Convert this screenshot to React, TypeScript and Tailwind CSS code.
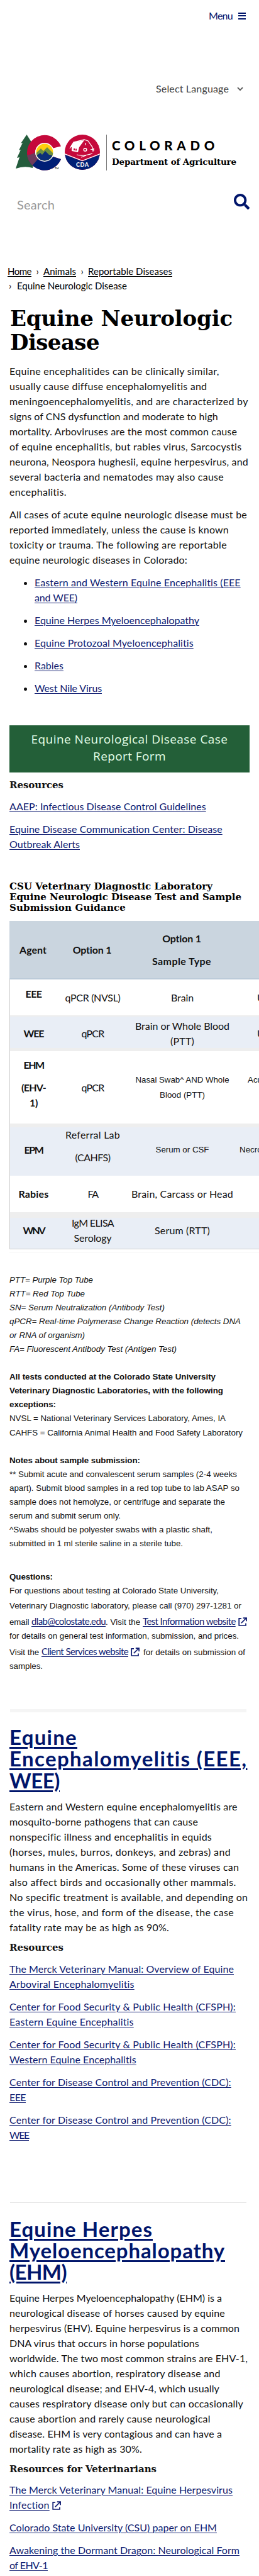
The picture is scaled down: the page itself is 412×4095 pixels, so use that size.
import { useLayoutEffect, useRef, useState } from "react";
import { FaSearch } from "react-icons/fa";

const SANS = "font-['Lato',sans-serif]";
const SLAB = "font-['DejaVu_Serif',serif] font-bold";
const ARIAL = "font-['Liberation_Sans',Arial,sans-serif] text-[13.33px]";
const LINK = "text-[#0d1a70] underline decoration-1 underline-offset-2";

/* A run of text whose letter spacing is tuned so that it spans `w` pixels. */
function Fit({ w, className = "", children }: { w: number; className?: string; children: string }) {
  const ref = useRef<HTMLSpanElement>(null);
  const [spacing, setSpacing] = useState(0);
  useLayoutEffect(() => {
    const el = ref.current;
    if (!el) return;
    el.style.letterSpacing = "0px";
    const natural = el.getBoundingClientRect().width;
    const next = (w - natural) / children.length;
    el.style.letterSpacing = `${next}px`;
    setSpacing(next);
  }, [w, children]);
  return (
    <span ref={ref} className={`whitespace-pre ${className}`} style={{ letterSpacing: `${spacing}px` }}>
      {children}
    </span>
  );
}

type Row = [string, number];

function Lines({ rows, className = "", runClass = "" }: { rows: Row[]; className?: string; runClass?: string }) {
  return (
    <p className={className}>
      {rows.map(([text, w]) => (
        <span key={text} className="block">
          <Fit w={w} className={runClass}>{text}</Fit>
        </span>
      ))}
    </p>
  );
}

function LinkBlock({ rows }: { rows: Row[] }) {
  return (
    <a href="#" className="block">
      <Lines rows={rows} runClass={LINK} />
    </a>
  );
}

function External({ className = "" }: { className?: string }) {
  return (
    <svg viewBox="0 0 14 14" className={`inline-block h-3.5 w-3.5 ${className}`} fill="none" stroke="#0d1a70" strokeWidth="1.7">
      <path d="M5 1.8H1.2V13H12V9.5M4.8 9.2 12 2M7.8 1.2h5.3v5" />
    </svg>
  );
}

function Logo() {
  return (
    <div className="flex h-[57px] items-stretch">
      <svg viewBox="0 0 136 57" className="h-[57px] w-[136px] shrink-0">
        <defs>
          <clipPath id="sun"><circle cx="46" cy="28" r="13.4" /></clipPath>
          <clipPath id="seal"><circle cx="106" cy="28" r="28" /></clipPath>
          <clipPath id="ring">
            <path d="M72 18.5A28 28 0 1 0 72 39L57.500 34.500A14 14 0 1 1 57.500 22Z" />
          </clipPath>
        </defs>
        <path d="M17.500 0 27 15 24 14 30 28 27 53Q14 49 0 54L6 36 2 37 8 24 5 25 11 13 8 14Z" fill="#245c3c" />
        <g clipPath="url(#ring)">
          <rect x="17" width="58" height="57" fill="#c5093b" />
          <path d="M20 44 38 27 56 34 75 32V57H17Z" fill="#001f76" />
          <path d="M18 32Q26 33 32 27L36 38 24 52H16Z" fill="#6d3a5c" />
        </g>
        <circle cx="46" cy="28" r="15" fill="#fff" />
        <g clipPath="url(#sun)">
          <rect x="32" y="14" width="28" height="28" fill="#ffcf0d" />
          <path d="M29 33 40 22 44 26 50 20 64 34V44H29Z" fill="#6d9040" />
          <path d="M31 35 39 29 42 32 47 26 53 32 62 34V44H31Z" fill="#0b2f7a" />
        </g>
        <text x="62" y="55" fontSize="4" className="font-['Lato']" fontWeight="700">TM</text>
        <g clipPath="url(#seal)">
          <rect x="78" width="56" height="57" fill="#c5093b" />
          <path d="M76 31 106 42.500 136 31V57H76Z" fill="#001f76" />
          <path d="M76 30 106 41.500 136 30" stroke="#fff" strokeWidth="1.300" fill="none" />
        </g>
        <path d="M86 22 92 12 109 8 115 10 122 20 123 27" stroke="#fff" strokeWidth="1.300" fill="none" />
        <path d="M89 16 93 12 109 9 101 20 99 28 89 26V20L87 20Z" fill="#fff" />
        <path d="M92 22h2v3h-2zM95 22.500h2v3h-2z" fill="#c5093b" />
        <circle cx="110.500" cy="24" r="2.300" fill="none" stroke="#fff" strokeWidth="1.500" />
        <path d="M111 13v4M119 23.500h5M124 21v5M97 32Q107 35 122 30M104 36 112 33" stroke="#fff" strokeWidth="1.200" fill="none" />
        <text x="96" y="51" fontSize="9" fill="#fff" fontWeight="900" textLength="20" className="font-['Lato']">CDA</text>
      </svg>
      <div className="ml-[8px] w-px bg-[#777]" />
      <div className="ml-[8px] pt-[5px]">
        <div className="h-[25px] font-['Lato',sans-serif] text-[20.5px] leading-[25px] font-black text-black">
          <Fit w={170}>COLORADO</Fit>
        </div>
        <div className={`mt-[2px] text-[13.5px] leading-[22px] text-black ${SLAB}`}>
          <Fit w={198}>Department of Agriculture</Fit>
        </div>
      </div>
    </div>
  );
}

function Cell({ rows, bold = false, arial = false, className = "" }: { rows: Row[]; bold?: boolean; arial?: boolean; className?: string }) {
  return (
    <div className={`flex flex-col items-center justify-center leading-6 ${bold ? "font-bold" : ""} ${arial ? ARIAL : ""} ${className}`}>
      {rows.map(([t, w]) => <span key={t} className="block"><Fit w={w}>{t}</Fit></span>)}
    </div>
  );
}

const GRID = "grid grid-cols-[75px_113px_172px_120px]";

function TestTable() {
  return (
    <div className="w-[397px] overflow-hidden">
      <div className="w-[480px] border-b border-l border-[#ccc]">
        <div className={`${GRID} -ml-px h-[93px] border-b-2 border-[#bccbd9] bg-[#cad5df] font-bold`}>
          <Cell rows={[["Agent", 43]]} />
          <Cell rows={[["Option 1", 62]]} />
          <Cell rows={[["Option 1", 62], ["Sample Type", 94]]} className="gap-3" />
        </div>
        <div className={`${GRID} h-[57px]`}>
          <Cell bold rows={[["EEE", 26]]} className="pb-3" />
          <Cell rows={[["qPCR (NVSL)", 88]]} />
          <Cell rows={[["Brain", 36]]} />
          <div className="flex items-center pl-[33px]">U</div>
        </div>
        <div className={`${GRID} h-[57px] bg-[#e9eef6] shadow-[inset_0_2px_0_#eee,inset_0_-5px_0_#eee]`}>
          <Cell bold rows={[["WEE", 32]]} />
          <Cell rows={[["qPCR", 36]]} />
          <Cell rows={[["Brain or Whole Blood", 150], ["(PTT)", 38]]} />
          <div className="flex items-center pl-[33px]">U</div>
        </div>
        <div className={`${GRID} h-[116px] shadow-[inset_0_-1px_0_#eee]`}>
          <div className="flex flex-col items-center justify-center pb-3 leading-6 font-bold">
            <Fit w={32}>EHM</Fit>
            <div className="mt-3"><Fit w={39}>(EHV-</Fit></div>
            <Fit w={13}>1)</Fit>
          </div>
          <Cell rows={[["qPCR", 36]]} />
          <Cell arial rows={[["Nasal Swab^ AND Whole", 149], ["Blood (PTT)", 72]]} />
          <div className={`${ARIAL} flex items-center pb-6 pl-[18px]`}>Acu</div>
        </div>
        <div className={`${GRID} h-[82px] bg-[#e9eef6] shadow-[inset_0_5px_0_#eee]`}>
          <Cell bold rows={[["EPM", 30]]} />
          <Cell rows={[["Referral Lab", 87], ["(CAHFS)", 56]]} className="gap-3 pb-3" />
          <Cell arial rows={[["Serum or CSF", 85]]} />
          <div className={`${ARIAL} flex items-center pl-[5px]`}>Necro</div>
        </div>
        <div className={`${GRID} h-[58px]`}>
          <Cell bold rows={[["Rabies", 48]]} />
          <Cell rows={[["FA", 16]]} />
          <Cell rows={[["Brain, Carcass or Head", 162]]} />
        </div>
        <div className={`${GRID} h-[58px] bg-[#e9eef6] shadow-[inset_0_9px_0_#eee]`}>
          <Cell bold rows={[["WNV", 34]]} />
          <Cell rows={[["IgM ELISA", 67], ["Serology", 60]]} />
          <Cell rows={[["Serum (RTT)", 88]]} />
        </div>
      </div>
      <div className="mt-1 h-px bg-[#f3f3f3]" />
    </div>
  );
}

function Heading({ rows, className = "" }: { rows: Row[]; className?: string }) {
  return (
    <h2 className={`text-[33px] leading-[34.3px] font-bold ${className}`}>
      <a href="#">
        <Lines rows={rows} runClass="text-[#00156b] underline decoration-[3px] underline-offset-[3px]" />
      </a>
    </h2>
  );
}

function SlabLabel({ text, w, className = "" }: { text: string; w: number; className?: string }) {
  return <h3 className={`h-[17px] text-[15px] leading-[17px] ${SLAB} ${className}`}><Fit w={w}>{text}</Fit></h3>;
}

export default function App() {
  return (
    <div className={`${SANS} h-[4095px] w-[412px] overflow-hidden bg-white text-base leading-6 text-[#111]`}>
      <header className="h-[420px]">
        <div className="flex h-[50px] items-center justify-end pr-[21px] text-[#00156b]">
          <Fit w={38}>Menu</Fit>
          <div className="ml-[9px] flex w-3 flex-col gap-[2.5px]">
            <i className="h-[2px] bg-[#00156b]" />
            <i className="h-[2px] bg-[#00156b]" />
            <i className="h-[2px] bg-[#00156b]" />
          </div>
        </div>
        <div className="mt-[79px] flex h-6 items-center justify-end pr-[25px] text-[#444]">
          <Fit w={116}>Select Language</Fit>
          <svg viewBox="0 0 10 7" className="ml-[13px] h-[7px] w-[10px]" fill="none" stroke="#555" strokeWidth="1.800"><path d="M1 1.200 5 5.200 9 1.200" /></svg>
        </div>
        <div className="mt-[61px] pl-[25px]"><Logo /></div>
        <div className="mt-[35px] flex items-start justify-between pr-[15px] pl-[27px]">
          <div className="pt-1 text-[20px] leading-[30px] text-[#999]"><Fit w={60}>Search</Fit></div>
          <FaSearch className="mt-[2px] h-[25px] w-[25px] text-[#00156b]" />
        </div>
      </header>

      <nav className="flex flex-col pl-3 text-[15px] leading-[23px] text-black">
        <div className="flex">
          <Fit w={38} className="underline underline-offset-2">Home</Fit>
          <span className="w-[19px] text-center">›</span>
          <Fit w={52} className="underline underline-offset-2">Animals</Fit>
          <span className="w-[19px] text-center">›</span>
          <Fit w={134} className="underline underline-offset-2">Reportable Diseases</Fit>
        </div>
        <div className="flex"><span className="w-[15px] pl-[2px]">›</span><Fit w={175}>Equine Neurologic Disease</Fit></div>
      </nav>

      <main className="pl-[15px]">
        <h1 className={`mt-[21px] pl-px text-[34px] leading-[38px] text-black ${SLAB}`}>
          <Lines rows={[["Equine Neurologic", 354], ["Disease", 142]]} />
        </h1>
        <Lines className="mt-[15px]" rows={[
          ["Equine encephalitides can be clinically similar,", 334],
          ["usually cause diffuse encephalomyelitis and", 314],
          ["meningoencephalomyelitis, and are characterized by", 380],
          ["signs of CNS dysfunction and moderate to high", 332],
          ["mortality. Arboviruses are the most common cause", 362],
          ["of equine encephalitis, but rabies virus, Sarcocystis", 370],
          ["neurona, Neospora hughesii, equine herpesvirus, and", 380],
          ["several bacteria and nematodes may also cause", 341],
          ["encephalitis.", 91],
        ]} />
        <Lines className="mt-3" rows={[
          ["All cases of acute equine neurologic disease must be", 378],
          ["reported immediately, unless the cause is known", 349],
          ["toxicity or trauma. The following are reportable", 346],
          ["equine neurologic diseases in Colorado:", 283],
        ]} />
        <ul className="mt-3 flex list-disc flex-col gap-3 pl-10">
          <li><LinkBlock rows={[["Eastern and Western Equine Encephalitis (EEE", 328], ["and WEE)", 68]]} /></li>
          <li><LinkBlock rows={[["Equine Herpes Myeloencephalopathy", 262]]} /></li>
          <li><LinkBlock rows={[["Equine Protozoal Myeloencephalitis", 253]]} /></li>
          <li><LinkBlock rows={[["Rabies", 46]]} /></li>
          <li><LinkBlock rows={[["West Nile Virus", 107]]} /></li>
        </ul>

        <button className="mt-[47px] block h-[75px] w-[382px] bg-[#235f38] pb-1 font-['Open_Sans',sans-serif] text-[19px] leading-[27px] text-[#e6ffe9]">
          <Lines rows={[["Equine Neurological Disease Case", 313], ["Report Form", 116]]} />
        </button>

        <SlabLabel text="Resources" w={86} className="mt-[12px]" />
        <div className="mt-[13px] flex flex-col gap-3">
          <LinkBlock rows={[["AAEP: Infectious Disease Control Guidelines", 313]]} />
          <LinkBlock rows={[["Equine Disease Communication Center: Disease", 339], ["Outbreak Alerts", 112]]} />
        </div>

        <h3 className={`mt-[47px] text-[15px] leading-[17px] text-black ${SLAB}`}>
          <Lines rows={[["CSU Veterinary Diagnostic Laboratory", 323], ["Equine Neurologic Disease Test and Sample", 369], ["Submission Guidance", 185]]} />
        </h3>
        <div className="mt-[12px]"><TestTable /></div>

        <section className={`${ARIAL} mt-[33px] leading-[22px]`}>
          <Lines className="italic" rows={[
            ["PTT= Purple Top Tube", 133],
            ["RTT= Red Top Tube", 120],
            ["SN= Serum Neutralization (Antibody Test)", 247],
            ["qPCR= Real-time Polymerase Change Reaction (detects DNA", 368],
            ["or RNA of organism)", 120],
            ["FA= Fluorescent Antibody Test (Antigen Test)", 266],
          ]} />
          <Lines className="mt-[22px] font-bold" rows={[
            ["All tests conducted at the Colorado State University", 328],
            ["Veterinary Diagnostic Laboratories, with the following", 340],
            ["exceptions:", 74],
          ]} />
          <Lines className="leading-[22.5px]" rows={[
            ["NVSL = National Veterinary Services Laboratory, Ames, IA", 344],
            ["CAHFS = California Animal Health and Food Safety Laboratory", 371],
          ]} />
          <Lines className="mt-[22px] font-bold" rows={[["Notes about sample submission:", 208]]} />
          <Lines rows={[
            ["** Submit acute and convalescent serum samples (2-4 weeks", 362],
            ["apart). Submit blood samples in a red top tube to lab ASAP so", 366],
            ["sample does not hemolyze, or centrifuge and separate the", 343],
            ["serum and submit serum only.", 177],
            ["^Swabs should be polyester swabs with a plastic shaft,", 323],
            ["submitted in 1 ml sterile saline in a sterile tube.", 276],
          ]} />
          <Lines className="mt-[31px] font-bold" rows={[["Questions:", 69]]} />
          <div className="-mt-px leading-6">
            <Lines rows={[
              ["For questions about testing at Colorado State University,", 333],
              ["Veterinary Diagnostic laboratory, please call (970) 297-1281 or", 369],
            ]} />
            <div className="flex h-6 items-baseline">
              <Fit w={35}>email </Fit>
              <a href="#" className={`${SANS} ${LINK} text-[15px] leading-6`}><Fit w={118}>dlab@colostate.edu</Fit></a>
              <Fit w={59}>. Visit the </Fit>
              <a href="#" className={`${SANS} ${LINK} text-[15px] leading-6`}><Fit w={148}>Test Information website</Fit></a>
              <External className="ml-1 translate-y-[2px]" />
            </div>
            <Lines rows={[["for details on general test information, submission, and prices.", 365]]} />
            <div className="flex h-6 items-baseline">
              <Fit w={51}>Visit the </Fit>
              <a href="#" className={`${SANS} ${LINK} text-[15px] leading-6`}><Fit w={138}>Client Services website</Fit></a>
              <External className="ml-1 mr-[6px] translate-y-[2px]" />
              <Fit w={162}>for details on submission of</Fit>
            </div>
            <Lines rows={[["samples.", 53]]} />
          </div>
        </section>

        <div className="mt-[56px] ml-px h-[5px] w-[376px] bg-[#f5f5f5]" />
        <Heading className="mt-[22px]" rows={[["Equine", 108], ["Encephalomyelitis (EEE,", 379], ["WEE)", 80]]} />
        <Lines className="mt-[13px]" rows={[
          ["Eastern and Western equine encephalomyelitis are", 363],
          ["mosquito-borne pathogens that can cause", 300],
          ["nonspecific illness and encephalitis in equids", 322],
          ["(horses, mules, burros, donkeys, and zebras) and", 352],
          ["humans in the Americas. Some of these viruses can", 365],
          ["also affect birds and occasionally other mammals.", 360],
          ["No specific treatment is available, and depending on", 379],
          ["the virus, hose, and form of the disease, the case", 357],
          ["fatality rate may be as high as 90%.", 254],
        ]} />
        <SlabLabel text="Resources" w={86} className="mt-[12px]" />
        <div className="mt-[13px] flex flex-col gap-3">
          <LinkBlock rows={[["The Merck Veterinary Manual: Overview of Equine", 357], ["Arboviral Encephalomyelitis", 199]]} />
          <LinkBlock rows={[["Center for Food Security & Public Health (CFSPH):", 360], ["Eastern Equine Encephalitis", 198]]} />
          <LinkBlock rows={[["Center for Food Security & Public Health (CFSPH):", 360], ["Western Equine Encephalitis", 202]]} />
          <LinkBlock rows={[["Center for Disease Control and Prevention (CDC):", 353], ["EEE", 26]]} />
          <LinkBlock rows={[["Center for Disease Control and Prevention (CDC):", 353], ["WEE", 31]]} />
        </div>

        <div className="mt-[95px] ml-px h-px w-[376px] bg-[#e2e2e2]" />
        <Heading className="mt-[24px]" rows={[["Equine Herpes", 228], ["Myeloencephalopathy", 343], ["(EHM)", 91]]} />
        <Lines className="mt-[12px]" rows={[
          ["Equine Herpes Myeloencephalopathy (EHM) is a", 338],
          ["neurological disease of horses caused by equine", 343],
          ["herpesvirus (EHV). Equine herpesvirus is a common", 366],
          ["DNA virus that occurs in horse populations", 302],
          ["worldwide. The two most common strains are EHV-1,", 379],
          ["which causes abortion, respiratory disease and", 336],
          ["neurological disease; and EHV-4, which usually", 334],
          ["causes respiratory disease only but can occasionally", 372],
          ["cause abortion and rarely cause neurological", 320],
          ["disease. EHM is very contagious and can have a", 338],
          ["mortality rate as high as 30%.", 211],
        ]} />
        <SlabLabel text="Resources for Veterinarians" w={234} className="mt-[12px]" />
        <div className="mt-[12px] flex flex-col gap-3">
          <div>
            <LinkBlock rows={[["The Merck Veterinary Manual: Equine Herpesvirus", 355]]} />
            <div className="flex h-6 items-baseline">
              <a href="#" className={LINK}><Fit w={64}>Infection</Fit></a>
              <External className="ml-1 translate-y-[2px]" />
            </div>
          </div>
          <LinkBlock rows={[["Colorado State University (CSU) paper on EHM", 330]]} />
          <LinkBlock rows={[["Awakening the Dormant Dragon: Neurological Form", 366], ["of EHV-1", 61]]} />
        </div>
      </main>
    </div>
  );
}
